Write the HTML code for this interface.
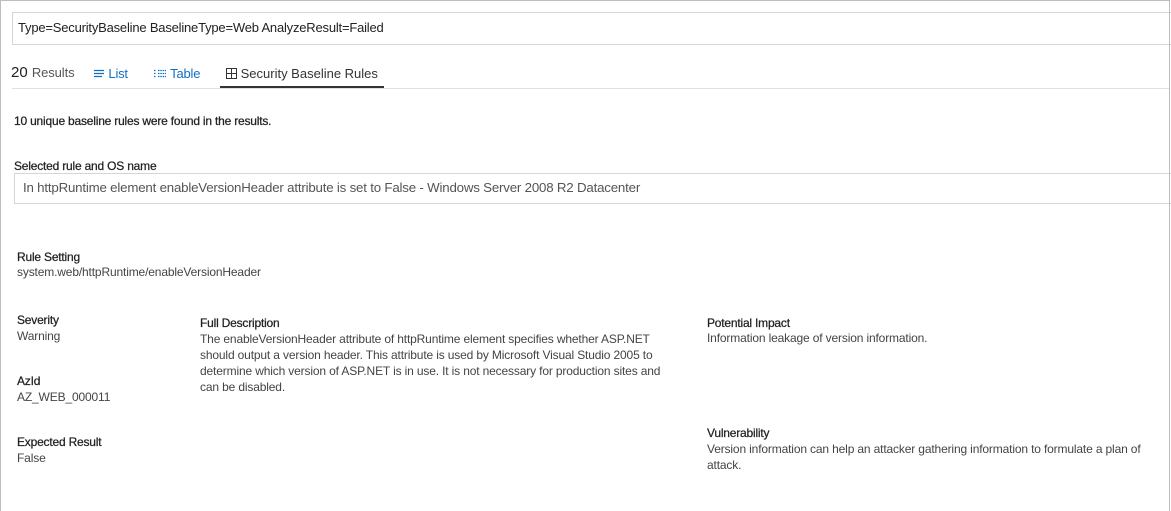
<!DOCTYPE html>
<html><head><meta charset="utf-8"><style>
*{margin:0;padding:0;box-sizing:border-box}
body{width:1171px;height:511px;background:#fff;font-family:"Liberation Sans",sans-serif;color:#333;position:relative;overflow:hidden}
.frame{position:absolute;left:0;top:0;width:1170px;height:511px;border:1px solid #bdbdbd;border-bottom:none}
.a{position:absolute;white-space:nowrap}
.box{position:absolute;border:1px solid #d6d6d6;background:#fff}
.s{font-size:12px;letter-spacing:-0.15px;color:#444}
.b{font-size:12px;letter-spacing:-0.2px;color:#222;-webkit-text-stroke:0.25px #222}
.blue{color:#0f6fc6}
</style></head><body>
<div class="box" style="left:12px;top:12px;width:1170px;height:33px"></div>
<div class="a" style="left:18px;top:20px;font-size:13px;letter-spacing:-0.2px;color:#222">Type=SecurityBaseline BaselineType=Web AnalyzeResult=Failed</div>
<div style="position:absolute;left:12px;top:88px;width:1157px;height:1px;background:#e0e0e0"></div>
<div style="position:absolute;left:220px;top:86px;width:164px;height:2px;background:#333"></div>
<div class="a" style="left:11px;top:64px;font-size:15px;color:#222">20 <span style="font-size:13px;color:#555;letter-spacing:-0.1px">Results</span></div>
<div class="a blue" style="left:93px;top:66px;font-size:13px;letter-spacing:-0.2px"><svg width="12" height="10" style="vertical-align:-1px"><path d="M1 1.5h10M1 4.5h10M1 7.5h8" stroke="#0f6fc6" stroke-width="1.2"/></svg> List</div>
<div class="a blue" style="left:153px;top:66px;font-size:13px;letter-spacing:-0.2px"><svg width="14" height="10" style="vertical-align:-1px"><path d="M1 1.5h2M5 1.5h8M1 4.5h2M5 4.5h8M1 7.5h2M5 7.5h8" stroke="#0f6fc6" stroke-width="1.2" stroke-dasharray="1.5 0.8"/></svg> Table</div>
<div class="a" style="left:226px;top:66px;font-size:13px;letter-spacing:0px;color:#333"><svg width="11" height="11" style="vertical-align:-1px"><rect x="0.5" y="0.5" width="10" height="10" fill="none" stroke="#333"/><path d="M0.5 5.5h10M5.5 0.5v10" stroke="#333"/></svg> Security Baseline Rules</div>
<div class="a b" style="left:14px;top:114px">10 unique baseline rules were found in the results.</div>
<div class="a b" style="left:14px;top:159px">Selected rule and OS name</div>
<div class="box" style="left:14px;top:173px;width:1170px;height:31px"></div>
<div class="a" style="left:23px;top:180px;font-size:13.3px;letter-spacing:-0.2px;color:#555">In httpRuntime element enableVersionHeader attribute is set to False - Windows Server 2008 R2 Datacenter</div>
<div class="a b" style="left:17px;top:250px">Rule Setting</div>
<div class="a s" style="left:17px;top:265px">system.web/httpRuntime/enableVersionHeader</div>
<div class="a b" style="left:17px;top:313px">Severity</div>
<div class="a s" style="left:17px;top:329px">Warning</div>
<div class="a b" style="left:17px;top:374px">AzId</div>
<div class="a s" style="left:17px;top:390px">AZ_WEB_000011</div>
<div class="a b" style="left:17px;top:435px">Expected Result</div>
<div class="a s" style="left:17px;top:451px">False</div>
<div class="a b" style="left:200px;top:316px">Full Description</div>
<div class="a s" style="left:200px;top:331px;line-height:16px">The enableVersionHeader attribute of httpRuntime element specifies whether ASP.NET<br>should output a version header. This attribute is used by Microsoft Visual Studio 2005 to<br>determine which version of ASP.NET is in use. It is not necessary for production sites and<br>can be disabled.</div>
<div class="a b" style="left:707px;top:316px">Potential Impact</div>
<div class="a s" style="left:707px;top:331px">Information leakage of version information.</div>
<div class="a b" style="left:707px;top:426px">Vulnerability</div>
<div class="a s" style="left:707px;top:441px;line-height:16px">Version information can help an attacker gathering information to formulate a plan of<br>attack.</div>
<div class="frame"></div>
</body></html>
